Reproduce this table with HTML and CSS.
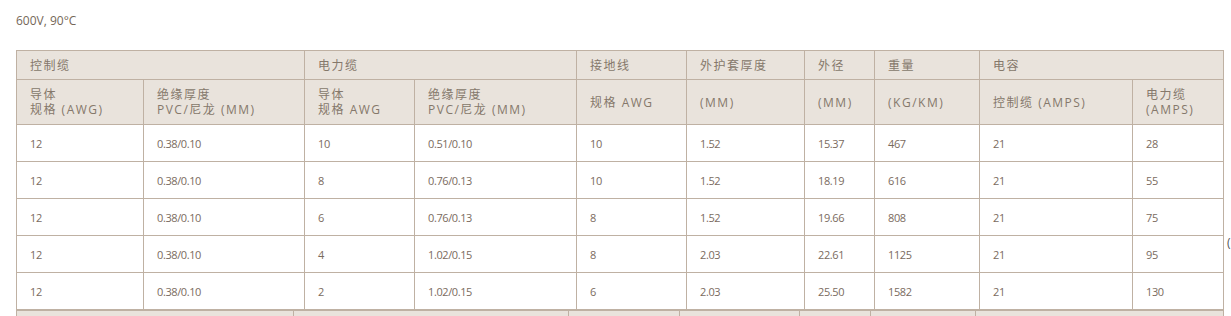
FILE: index.html
```html
<!DOCTYPE html>
<html lang="zh">
<head>
<meta charset="utf-8">
<title>600V, 90°C</title>
<link rel="stylesheet" href="styles.css">
</head>
<body>
<div class="page">
  <p class="rating">600V, 90°C</p>
  <table class="spec">
    <colgroup>
      <col class="c1"><col class="c2"><col class="c3"><col class="c4"><col class="c5">
      <col class="c6"><col class="c7"><col class="c8"><col class="c9"><col class="c10">
    </colgroup>
    <thead>
      <tr class="h1">
        <th colspan="2">控制缆</th>
        <th colspan="2">电力缆</th>
        <th>接地线</th>
        <th>外护套厚度</th>
        <th>外径</th>
        <th>重量</th>
        <th colspan="2">电容</th>
      </tr>
      <tr class="h2">
        <th>导体<br>规格 (AWG)</th>
        <th>绝缘厚度<br>PVC/尼龙 (MM)</th>
        <th>导体<br>规格 AWG</th>
        <th>绝缘厚度<br>PVC/尼龙 (MM)</th>
        <th>规格 AWG</th>
        <th>(MM)</th>
        <th>(MM)</th>
        <th>(KG/KM)</th>
        <th>控制缆 (AMPS)</th>
        <th>电力缆 (AMPS)</th>
      </tr>
    </thead>
    <tbody>
      <tr><td>12</td><td>0.38/0.10</td><td>10</td><td>0.51/0.10</td><td>10</td><td>1.52</td><td>15.37</td><td>467</td><td>21</td><td>28</td></tr>
      <tr><td>12</td><td>0.38/0.10</td><td>8</td><td>0.76/0.13</td><td>10</td><td>1.52</td><td>18.19</td><td>616</td><td>21</td><td>55</td></tr>
      <tr><td>12</td><td>0.38/0.10</td><td>6</td><td>0.76/0.13</td><td>8</td><td>1.52</td><td>19.66</td><td>808</td><td>21</td><td>75</td></tr>
      <tr><td>12</td><td>0.38/0.10</td><td>4</td><td>1.02/0.15</td><td>8</td><td>2.03</td><td>22.61</td><td>1125</td><td>21</td><td>95</td></tr>
      <tr><td>12</td><td>0.38/0.10</td><td>2</td><td>1.02/0.15</td><td>6</td><td>2.03</td><td>25.50</td><td>1582</td><td>21</td><td>130</td></tr>
    </tbody>
  </table>
  <table class="spec next">
    <colgroup>
      <col class="n1"><col class="n2"><col class="n3"><col class="n4"><col class="n5"><col class="n6"><col class="n7">
    </colgroup>
    <thead>
      <tr class="h1">
        <th></th><th></th><th></th><th></th><th></th><th></th><th></th>
      </tr>
    </thead>
  </table>
  <span class="edge-mark">(</span>
</div>
</body>
</html>
```

FILE: styles.css
```css
html, body {
  margin: 0;
  padding: 0;
  background: #ffffff;
}

.page {
  position: relative;
  padding: 12px 0 0 16px;
  font-family: "Open Sans", "Noto Sans CJK SC", sans-serif;
  color: #7a6b5e;
}

.rating {
  margin: 0 0 21px 0;
  font-size: 12px;
  line-height: 17px;
  color: #756758;
}

.spec {
  border-collapse: collapse;
  table-layout: fixed;
  width: 1207px;
  border: 1px solid #bfb1a3;
}

.spec th,
.spec td {
  border: 1px solid #bfb1a3;
  padding: 0 12px 0 13px;
  text-align: left;
  vertical-align: middle;
}

.spec th {
  background: #e9e3dc;
  font-weight: normal;
  font-size: 12px;
  line-height: 15px;
  letter-spacing: 1.5px;
  color: #85786b;
}

.spec td {
  font-size: 11px;
  letter-spacing: -0.4px;
  line-height: 15px;
  color: #7a6b5e;
}

.spec .h1 { height: 29px; }
.spec .h2 { height: 45px; }
.spec tbody tr { height: 37px; }

.c1 { width: 127px; }
.c2 { width: 161px; }
.c3 { width: 110px; }
.c4 { width: 162px; }
.c5 { width: 110px; }
.c6 { width: 118px; }
.c7 { width: 70px; }
.c8 { width: 105px; }
.c9 { width: 153px; }
.c10 { width: 91px; }

.n1 { width: 277px; }
.n2 { width: 275px; }
.n3 { width: 111px; }
.n4 { width: 120px; }
.n5 { width: 71px; }
.n6 { width: 105px; }
.n7 { width: 248px; }

.edge-mark {
  position: absolute;
  left: 1227px;
  top: 236px;
  font-size: 12px;
  line-height: 14px;
  color: #555555;
}
```
